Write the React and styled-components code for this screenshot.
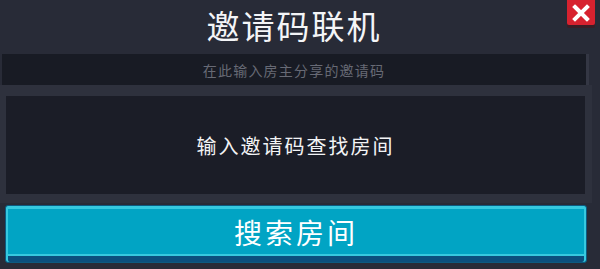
import React from "react";
import styled, { createGlobalStyle } from "styled-components";

const GlobalStyle = createGlobalStyle`
  html, body {
    margin: 0;
    padding: 0;
    background: #282b37;
  }
  body {
    font-family: "Noto Sans CJK SC", "Noto Sans", sans-serif;
  }
`;

const Panel = styled.div`
  position: relative;
  width: 600px;
  height: 269px;
  background: #282b37;
  display: flex;
  flex-direction: column;
  overflow: hidden;
`;

const Header = styled.div`
  height: 54px;
  display: flex;
  align-items: center;
  justify-content: center;
  padding-right: 12px;
`;

const Title = styled.h1`
  margin: 0;
  color: #f4f5f7;
  font-size: 33px;
  font-weight: 400;
  letter-spacing: 2px;
  line-height: 1;
  padding-bottom: 4px;
`;

const CloseButton = styled.button`
  position: absolute;
  top: 0;
  right: 5px;
  width: 28px;
  height: 25px;
  padding: 0;
  border: none;
  border-radius: 0 0 2px 2px;
  background: #d7222f;
  box-shadow: 0 3px 0 #3a1e26;
  display: flex;
  align-items: center;
  justify-content: center;
  cursor: pointer;
`;

const CodeInput = styled.input`
  box-sizing: border-box;
  height: 31px;
  margin: 0 11px 0 2px;
  border: none;
  border-right: 3px solid #343744;
  background: #181b24;
  color: #dfe0e4;
  font-family: inherit;
  font-size: 14px;
  letter-spacing: 1.2px;
  text-align: center;
  outline: none;
  &::placeholder {
    color: #676a75;
  }
`;

const Frame = styled.div`
  margin-right: 8px;
  padding: 11px 7px 9px 6px;
  background: #2e313d;
`;

const ResultBox = styled.div`
  height: 98px;
  background: #1b1d27;
  display: flex;
  align-items: center;
  justify-content: center;
  color: #f2f3f5;
  font-size: 20px;
  letter-spacing: 2px;
`;

const SearchButton = styled.button`
  box-sizing: border-box;
  height: 58px;
  margin: 2px 13px 0 5px;
  border: 1px solid #0c5a80;
  border-radius: 3px;
  background: #01a4c4;
  box-shadow: inset 0 3px 0 #36c9df, inset 2px 0 0 #36c9df, inset -2px 0 0 #36c9df,
    inset 0 -6px 0 #0b4f7d, inset 0 -8px 0 #36c9df;
  color: #ffffff;
  font-family: inherit;
  font-size: 28px;
  letter-spacing: 3px;
  padding: 0 0 4px;
  cursor: pointer;
`;

export default function App() {
  return (
    <>
      <GlobalStyle />
      <Panel>
        <Header>
          <Title>邀请码联机</Title>
        </Header>
        <CloseButton aria-label="关闭">
          <svg width="18" height="18" viewBox="0 0 18 18">
            <path
              d="M3 3 L15 15 M15 3 L3 15"
              stroke="#ffffff"
              strokeWidth="4"
              strokeLinecap="square"
            />
          </svg>
        </CloseButton>
        <CodeInput placeholder="在此输入房主分享的邀请码" />
        <Frame>
          <ResultBox>输入邀请码查找房间</ResultBox>
        </Frame>
        <SearchButton>搜索房间</SearchButton>
      </Panel>
    </>
  );
}
